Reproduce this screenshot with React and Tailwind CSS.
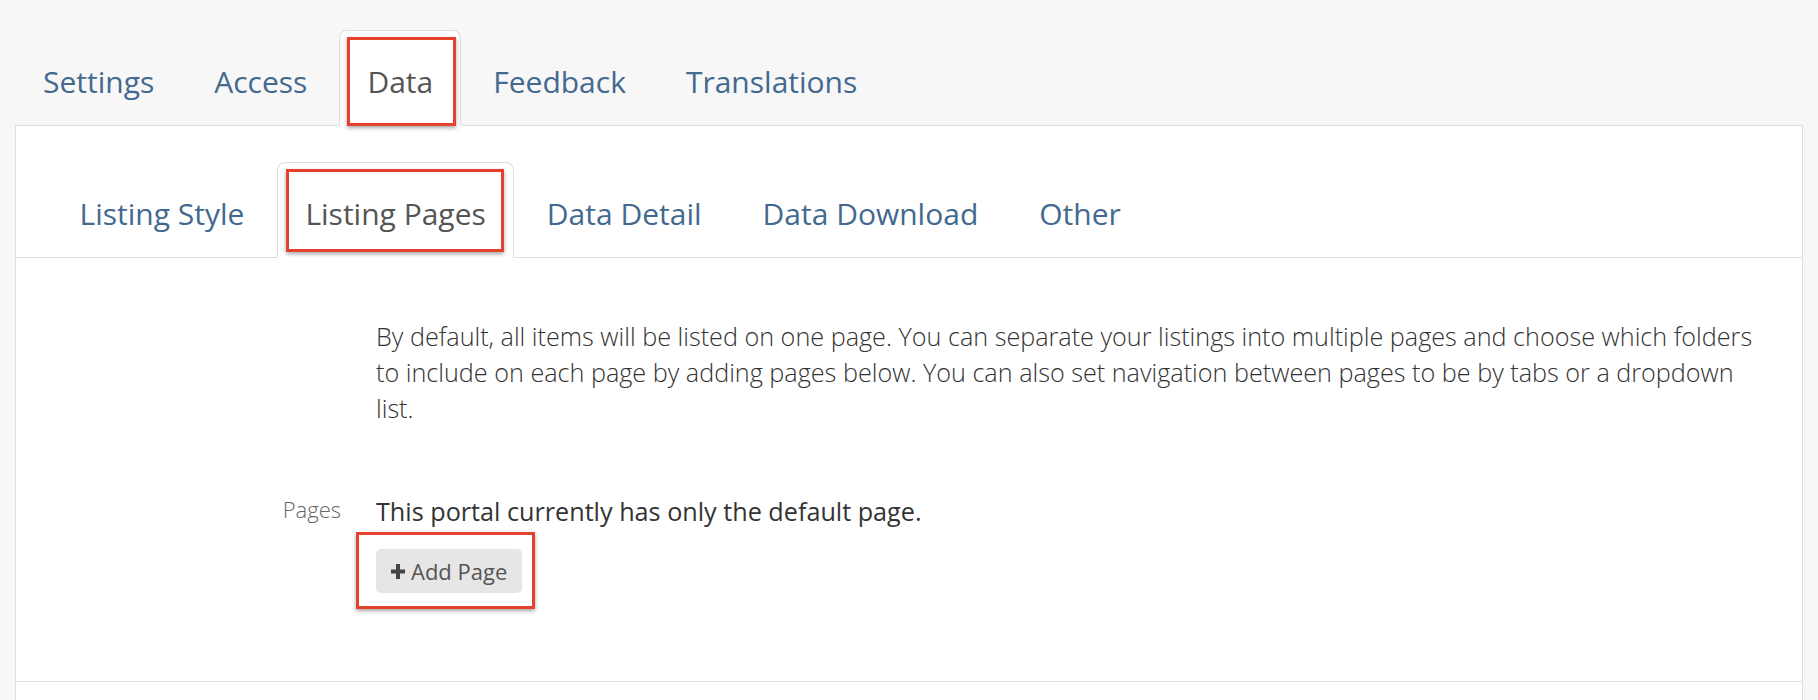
const topTabs = ["Settings", "Access", "Data", "Feedback", "Translations"];
const subTabs = ["Listing Style", "Listing Pages", "Data Detail", "Data Download", "Other"];

function Tab({ label, active, annot, pad }) {
  return (
    <li className="relative -mb-px mr-[4px]">
      <a
        href="#"
        className={`block ${pad} pt-[30px] pb-[22px] text-[30px] leading-[42px] border rounded-t-[8px] ${
          active
            ? "bg-white border-[#dedede] border-b-white text-[#555555]"
            : "border-transparent text-[#43698f]"
        }`}
      >
        {label}
      </a>
      {annot && (
        <span className={`pointer-events-none absolute border-[3px] border-[#e5412d] shadow-[0_2px_4px_rgba(0,0,0,0.35)] ${annot}`}></span>
      )}
    </li>
  );
}

function PlusIcon() {
  return (
    <svg width="14" height="15" viewBox="0 0 14 15" className="shrink-0">
      <rect x="5" y="0" width="4" height="15" fill="#444" />
      <rect x="0" y="5.5" width="14" height="4" fill="#444" />
    </svg>
  );
}

export default function App() {
  return (
    <div className="min-h-screen bg-[#f7f7f7] px-[15px] pt-[30px] font-['Open_Sans',sans-serif]">
      <ul className="flex">
        {topTabs.map((t) => (
          <Tab
            key={t}
            label={t}
            pad="px-[27px]"
            active={t === "Data"}
            annot={t === "Data" ? "left-[8px] right-[5px] top-[7px] bottom-0" : null}
          />
        ))}
      </ul>

      <div className="bg-white border border-[#dedede] pt-[36px]">
        <ul className="flex pl-[35px] border-b border-[#dedede]">
          {subTabs.map((t) => (
            <Tab
              key={t}
              label={t}
              pad="px-[27.5px]"
              active={t === "Listing Pages"}
              annot={t === "Listing Pages" ? "left-[9px] right-[10px] top-[7px] bottom-[6px]" : null}
            />
          ))}
        </ul>

        <div className="pb-[88px] border-b border-[#e3e3e3]">
          <div className="flex mt-[60px]">
            <div className="w-[360px] shrink-0"></div>
            <p className="flex-1 pr-[38px] text-[25.2px] leading-[36px] font-light text-[#333333]">
              By default, all items will be listed on one page. You can separate your listings into multiple pages and choose which folders to include on each page by adding pages below. You can also set navigation between pages to be by tabs or a dropdown list.
            </p>
          </div>

          <div className="flex mt-[67px]">
            <div className="w-[360px] shrink-0 pr-[35px] text-right text-[22px] leading-[33px] font-light text-[#666666]">
              Pages
            </div>
            <div className="flex-1 pr-[30px]">
              <p className="text-[25.2px] leading-[36px] text-[#333333]">
                This portal currently has only the default page.
              </p>
              <div className="relative inline-block mt-[20px]">
                <button className="flex items-center gap-[6px] h-[44px] px-[15px] rounded-[5px] bg-[#e6e6e6] text-[22px] text-[#555555]">
                  <PlusIcon />
                  Add Page
                </button>
                <span className="pointer-events-none absolute left-[-20px] right-[-13px] top-[-17px] bottom-[-16px] border-[3px] border-[#e5412d] shadow-[0_2px_4px_rgba(0,0,0,0.35)]"></span>
              </div>
            </div>
          </div>
        </div>
        <div className="h-[40px]"></div>
      </div>
    </div>
  );
}
